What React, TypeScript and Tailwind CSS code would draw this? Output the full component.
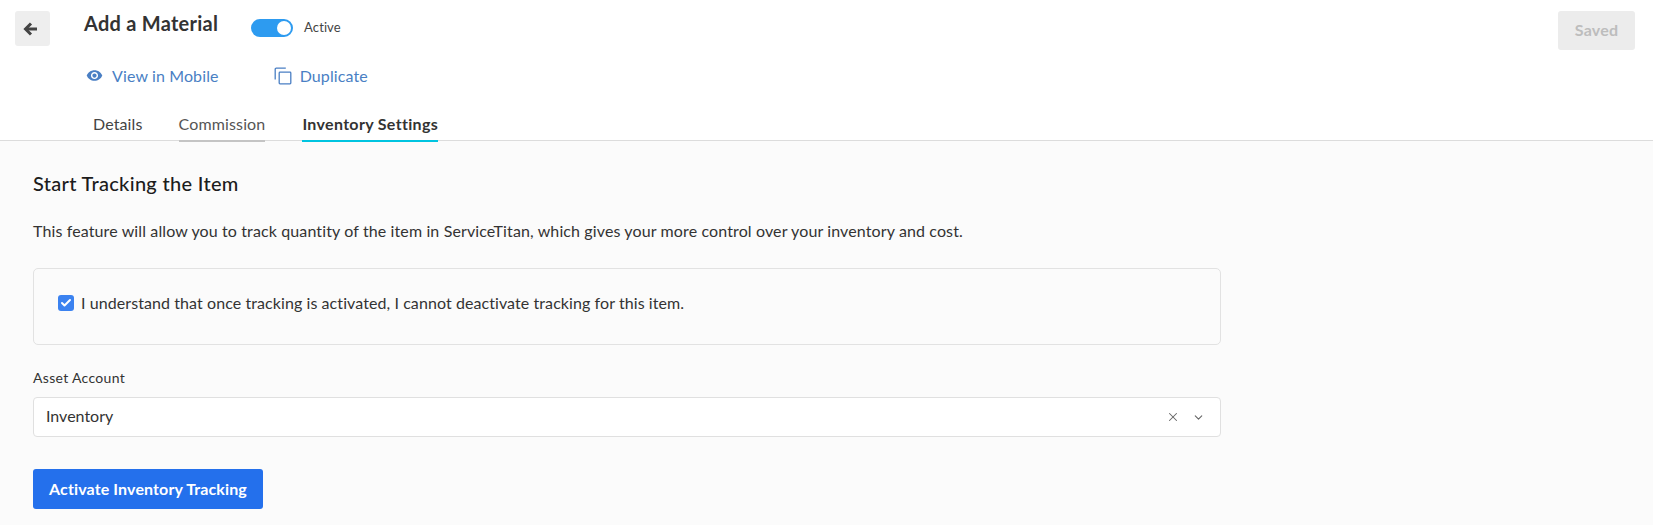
import React from 'react';
import { Check, ChevronDown, X } from 'lucide-react';

const BackArrow = () => (
  <svg width="15" height="14" viewBox="0 0 15 14" className="text-[#444]" fill="none" stroke="currentColor" strokeWidth="3">
    <path d="M14 7H3" />
    <path d="M8 1.5 2.5 7 8 12.5" />
  </svg>
);

const EyeIcon = () => (
  <svg width="17" height="17" viewBox="0 0 24 24" fill="currentColor">
    <path d="M12 4.5C7 4.5 2.73 7.61 1 12c1.73 4.39 6 7.5 11 7.5s9.27-3.11 11-7.5c-1.73-4.39-6-7.5-11-7.5zM12 17c-2.76 0-5-2.24-5-5s2.24-5 5-5 5 2.24 5 5-2.24 5-5 5zm0-8c-1.66 0-3 1.34-3 3s1.34 3 3 3 3-1.34 3-3-1.34-3-3-3z" />
  </svg>
);

const DuplicateIcon = () => (
  <svg width="18" height="18" viewBox="0 0 18 18" fill="none" stroke="currentColor" strokeWidth="1.3">
    <rect x="5.2" y="5.2" width="11.6" height="11.6" rx="0.8" />
    <path d="M1.2 12.5V2.2a1 1 0 0 1 1-1h9.6" />
  </svg>
);

export default function App() {
  return (
    <div className="h-[525px] w-[1653px] overflow-hidden bg-[#fbfbfb] font-['Lato',sans-serif] text-[#333]">
      {/* Header */}
      <div className="flex h-[141px] justify-between border-b border-[#dcdcdc] bg-white pt-[11px] pr-[18px] pl-[15px]">
        <div className="flex items-start gap-[34px]">
          <button className="flex h-[35px] w-[35px] items-center justify-center rounded-[3px] bg-[#eeeeee] pr-[4px]">
            <BackArrow />
          </button>
          <div>
            <div className="flex items-center">
              <h1 className="-mt-[1px] mb-[1px] text-[20px] leading-[26px] font-bold tracking-[0.25px] text-[#333]">Add a Material</h1>
              <div className="mt-[7px] ml-[33px] flex h-[18px] w-[42px] items-center justify-end rounded-full bg-[#2d9bf0] pr-[2px]">
                <span className="h-[14px] w-[14px] rounded-full bg-white"></span>
              </div>
              <span className="mt-[7px] ml-[11px] text-[13px] tracking-[0.1px] text-[#444]">Active</span>
            </div>
            <div className="mt-[27px] flex items-center text-[16px] leading-[22px] tracking-[0.12px] text-[#4a7fc4]">
              <span className="ml-[2px]"><EyeIcon /></span>
              <span className="ml-[9px]">View in Mobile</span>
              <span className="ml-[55px]"><DuplicateIcon /></span>
              <span className="ml-[8px]">Duplicate</span>
            </div>
            <div className="mt-[26px] ml-[9px] flex gap-[36px] text-[16px] leading-[22px] tracking-[0.12px]">
              <div className="h-[29px] border-b-[2px] border-transparent text-[#444]">Details</div>
              <div className="h-[29px] border-b-[2px] border-[#c4c4c4] tracking-[0.14px] text-[#555]">Commission</div>
              <div className="ml-[1px] h-[29px] border-b-[2px] border-[#00c4e0] font-bold tracking-[0.33px] text-[#333]">Inventory Settings</div>
            </div>
          </div>
        </div>
        <button className="h-[39px] w-[77px] rounded-[3px] bg-[#ececec] pb-[2px] text-[16px] font-bold tracking-[0.2px] text-[#bdbdbd]">Saved</button>
      </div>

      {/* Body */}
      <div className="w-[1221px] pt-[29px] pl-[33px]">
        <h2 className="text-[20px] leading-[26px] font-medium tracking-[0.3px] text-[#1c1c1c]">Start Tracking the Item</h2>
        <p className="mt-[25px] text-[16px] leading-[20px] tracking-[0.12px] text-[#333]">
          This feature will allow you to track quantity of the item in ServiceTitan, which gives your more control over your inventory and cost.
        </p>
        <div className="mt-[27px] flex h-[77px] items-center rounded-[5px] border border-[#e2e2e2] bg-[#fbfbfb] pb-[8px] pl-[24px]">
          <span className="flex h-[16px] w-[16px] items-center justify-center rounded-[3px] bg-[#3b82f0]">
            <Check className="h-[12px] w-[12px] text-white" strokeWidth={4} />
          </span>
          <span className="ml-[7px] text-[16px] tracking-[0.08px] text-[#333]">I understand that once tracking is activated, I cannot deactivate tracking for this item.</span>
        </div>
        <label className="mt-[24px] block text-[14px] leading-[18px] tracking-[0.32px] text-[#333]">Asset Account</label>
        <div className="mt-[10px] flex h-[40px] items-center rounded-[4px] border border-[#e0e0e0] bg-white pr-[15px] pl-[12px]">
          <span className="flex-1 pb-[2px] text-[16px] text-[#333]">Inventory</span>
          <X className="h-[14px] w-[14px] text-[#666]" strokeWidth={1.8} />
          <ChevronDown className="ml-[12px] h-[13px] w-[13px] text-[#666]" strokeWidth={2} />
        </div>
        <button className="mt-[32px] h-[40px] w-[230px] rounded-[3px] bg-[#2470ec] text-[16px] font-bold tracking-[0.12px] text-white">Activate Inventory Tracking</button>
      </div>
    </div>
  );
}
